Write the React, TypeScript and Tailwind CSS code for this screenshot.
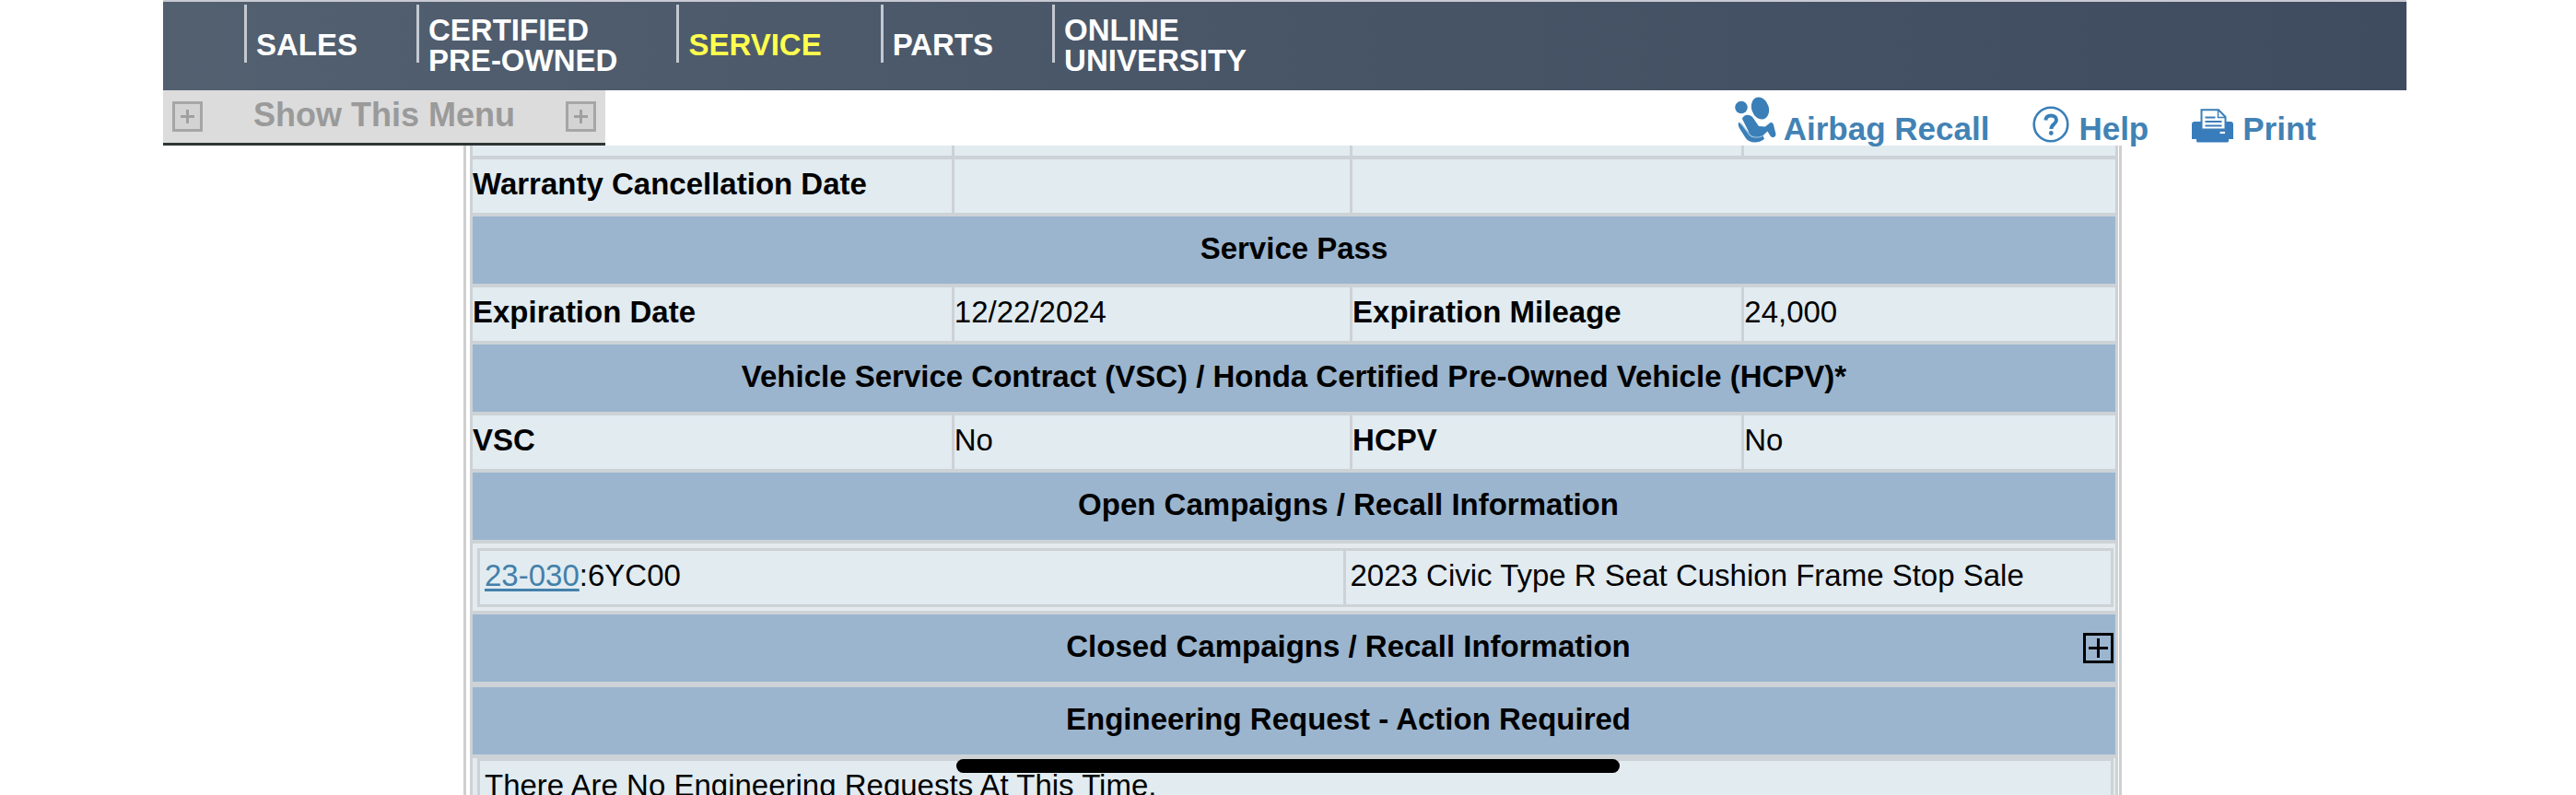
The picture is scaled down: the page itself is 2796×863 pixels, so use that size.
import React from 'react';

const navItems = [
    { lines: ['SALES'], active: false },
    { lines: ['CERTIFIED', 'PRE-OWNED'], active: false },
    { lines: ['SERVICE'], active: true },
    { lines: ['PARTS'], active: false },
    { lines: ['ONLINE', 'UNIVERSITY'], active: false },
];

const AirbagIcon = () => (
    <svg width="46" height="50" viewBox="0 0 46 50" fill="#3a7fb8" className="mb-[3px] shrink-0" aria-hidden="true">
        <circle cx="8" cy="11.5" r="6.8" />
        <ellipse cx="28.5" cy="12.5" rx="9.3" ry="12.3" transform="rotate(-18 28.5 12.5)" />
        {/* torso and legs */}
        <path d="M9 24c1-5 8-6 11.500-1.500l6.500 9.500 7 .5 5-4c2-1.200 3.500 0 4 2l2.500 10c0 4-4 4.500-6 2l-3-5-6.500 6c-4 3-9.500 2-12-1.500z" />
        {/* seat */}
        <path d="M5.500 27.500c-1.500 2-.5 5 1 7.500l6 9.500c4 6.500 14 6.500 20.500 1.500l-1.500-4c-5 3-11 3-14-1.500z" />
        <path d="M7.500 28.500 16.500 41c3 3.500 9.500 4 15 1.500" fill="none" stroke="#9cc3e0" strokeWidth="1.200" />
    </svg>
);

const HelpIcon = () => (
    <svg width="40" height="40" viewBox="0 0 40 40" fill="none" stroke="#3a7fb8" className="mb-[3px] shrink-0" aria-hidden="true">
        <circle cx="20" cy="20" r="18.300" strokeWidth="2.600" />
        <path d="M14.300 15.500c.3-3.300 2.700-5 5.900-5 3.400 0 5.800 1.800 5.800 4.800 0 4.500-5.600 4.600-5.600 9.700" strokeWidth="4" />
        <circle cx="20.300" cy="29.500" r="2.400" fill="#3a7fb8" stroke="none" />
    </svg>
);

const PrintIcon = () => (
    <svg width="45" height="37" viewBox="0 0 45 37" className="mb-[3px] shrink-0" aria-hidden="true">
        <path d="M0 17c0-2 1-3 3-3h39c2 0 3 1 3 3v16h-5V35q0 1.500-2 1.500H7Q5 36.500 5 35v-2H0z" fill="#387cbc" />
        <path d="M10.500 1.200h18.500l7.500 7.800v13.500h-26z" fill="#fff" stroke="#3a7fb8" strokeWidth="2" />
        <path d="M28.500 1.500v8h7.500" fill="none" stroke="#3a7fb8" strokeWidth="1.500" />
        <path d="M14.500 9.500h11M14.500 14h18M14.500 18.500h18" stroke="#3a7fb8" strokeWidth="2" />
        <path d="M30.500 26h5.500" stroke="#fff" strokeWidth="2.200" />
    </svg>
);

const PlusGlyph = () => (
    <svg width="21" height="21" viewBox="0 0 21 21" stroke="currentColor" strokeWidth="3" aria-hidden="true">
        <path d="M10.500 0v21M0 10.500h21" />
    </svg>
);

const MenuPlus = () => (
    <span className="flex h-[33px] w-[33px] items-center justify-center border-[3px] border-[#a6a6a6] bg-[#d3d3d3] text-[#a0a0a0]">
        <svg width="17" height="17" viewBox="0 0 17 17" stroke="currentColor" strokeWidth="3" aria-hidden="true">
            <path d="M8.500 1v15M1 8.500h15" />
        </svg>
    </span>
);

interface ICellProps {
    children?: React.ReactNode;
    colSpan?: number;
}

const Label: React.FC<ICellProps> = ({ children }) => (
    <th scope="row" className="h-[58px] bg-[#e1ebf0] pb-1 text-left font-bold">{children}</th>
);

const Value: React.FC<ICellProps> = ({ children, colSpan }) => (
    <td colSpan={colSpan} className="h-[58px] bg-[#e1ebf0] pb-1">{children}</td>
);

const SectionRow: React.FC<ICellProps> = ({ children }) => (
    <tr>
        <th colSpan={4} className="h-[73px] bg-[#9bb5ce] pb-1 text-center font-bold">{children}</th>
    </tr>
);

const VehicleTable = () => (
    <table className="-mt-1 w-full table-fixed border-separate border-spacing-x-[3px] border-spacing-y-[4px] bg-[#cdd2d6] leading-[38px]">
        <colgroup>
            <col className="w-[29.3%]" />
            <col className="w-[24.2%]" />
            <col className="w-[23.8%]" />
            <col />
        </colgroup>
        <tbody>
            {/* tail of the row that has scrolled under the toolbar */}
            <tr>
                {[0, 1, 2, 3].map((i) => (
                    <td key={i} className="h-[11px] bg-[#e1ebf0]"></td>
                ))}
            </tr>
            <tr>
                <Label>Warranty Cancellation Date</Label>
                <Value />
                <Value colSpan={2} />
            </tr>
            <SectionRow>Service Pass</SectionRow>
            <tr>
                <Label>Expiration Date</Label>
                <Value>12/22/2024</Value>
                <Label>Expiration Mileage</Label>
                <Value>24,000</Value>
            </tr>
            <SectionRow>Vehicle Service Contract (VSC) / Honda Certified Pre-Owned Vehicle (HCPV)*</SectionRow>
            <tr>
                <Label>VSC</Label>
                <Value>No</Value>
                <Label>HCPV</Label>
                <Value>No</Value>
            </tr>
            <SectionRow>
                <span className="block pl-[118px]">Open Campaigns / Recall Information</span>
            </SectionRow>
            <tr>
                <td colSpan={4} className="bg-[#e5eaef] pt-[5px] pr-[2px] pb-[4px] pl-[5px]">
                    <table className="w-full table-fixed border-separate border-spacing-[3px] bg-[#cdd2d6]">
                        <tbody>
                            <tr>
                                <td className="h-[58px] w-[53%] bg-[#e1ebf0] pb-1 pl-[5px]">
                                    <a href="#campaign" className="text-[#4380aa] underline decoration-[3px] underline-offset-[3px]">23-030</a>:6YC00
                                </td>
                                <td className="h-[58px] bg-[#e1ebf0] pb-1 pl-[5px]">2023 Civic Type R Seat Cushion Frame Stop Sale</td>
                            </tr>
                        </tbody>
                    </table>
                </td>
            </tr>
            <tr>
                <th colSpan={4} className="h-[75px] border-b-2 border-[#cdd2d6] bg-[#9bb5ce] font-bold">
                    <div className="flex items-center pr-[2px]">
                        <span className="grow pb-1 pl-[153px] text-center">Closed Campaigns / Recall Information</span>
                        <button
                            type="button"
                            aria-label="Expand closed campaigns"
                            className="flex h-[33px] w-[33px] items-center justify-center border-[3px] border-black text-black"
                        >
                            <PlusGlyph />
                        </button>
                    </div>
                </th>
            </tr>
            <SectionRow>
                <span className="block pl-[118px]">Engineering Request - Action Required</span>
            </SectionRow>
            <tr>
                <td colSpan={4} className="bg-[#e5eaef] pr-[2px] pb-[4px] pl-[5px]">
                    <table className="w-full border-separate border-spacing-[3px] bg-[#cdd2d6]">
                        <tbody>
                            <tr>
                                <td className="h-[58px] bg-[#e1ebf0] pb-1 pl-[5px]">There Are No Engineering Requests At This Time.</td>
                            </tr>
                        </tbody>
                    </table>
                </td>
            </tr>
        </tbody>
    </table>
);

export default function App() {
    return (
        <div className="h-screen overflow-hidden bg-white font-['Liberation_Sans',Arial,sans-serif] text-[33px] text-black">
            <header className="mr-[184px] ml-[177px]">
                <nav className="flex h-[98px] border-t-2 border-[#c9c9d3] bg-gradient-to-r from-[#526070] to-[#3f4b5f] pl-[88px] leading-[33px] font-bold">
                    {navItems.map((item) => (
                        <div key={item.lines[0]} className="flex pr-16">
                            <span className="mt-[3px] h-[63px] w-[3px] bg-[#c3c9d1]"></span>
                            <a
                                href="#nav"
                                className={`flex flex-col justify-center pb-[3px] pl-[10px] ${item.active ? 'text-[#ffff4d]' : 'text-white'}`}
                            >
                                {item.lines.map((line) => (
                                    <span key={line} className="whitespace-nowrap">{line}</span>
                                ))}
                            </a>
                        </div>
                    ))}
                </nav>
                <div className="flex h-[60px] items-end justify-between">
                    <button
                        type="button"
                        className="flex h-[60px] w-[480px] items-center justify-between border-b-[3px] border-[#2f3535] bg-[#dcdcdc] px-[10px] text-[36px] leading-[42px] font-bold text-[#9a9a9a]"
                    >
                        <MenuPlus />
                        <span className="pb-1">Show This Menu</span>
                        <MenuPlus />
                    </button>
                    <div className="flex gap-[47px] pr-[98px] text-[35px] leading-[37px] font-bold text-[#4282b4]">
                        <a href="#airbag" className="flex items-end gap-2">
                            <AirbagIcon />
                            Airbag Recall
                        </a>
                        <a href="#help" className="flex items-end gap-[10px]">
                            <HelpIcon />
                            Help
                        </a>
                        <a href="#print" className="flex items-end gap-[10px]">
                            <PrintIcon />
                            Print
                        </a>
                    </div>
                </div>
            </header>

            <main className="mr-[493px] ml-[503px] overflow-hidden border-x-[3px] border-[#cfcfcf] pr-px pl-1">
                <VehicleTable />
            </main>

            {/* home indicator */}
            <div className="fixed bottom-6 left-1/2 h-[15px] w-[720px] -translate-x-1/2 rounded-full bg-black"></div>
        </div>
    );
}
